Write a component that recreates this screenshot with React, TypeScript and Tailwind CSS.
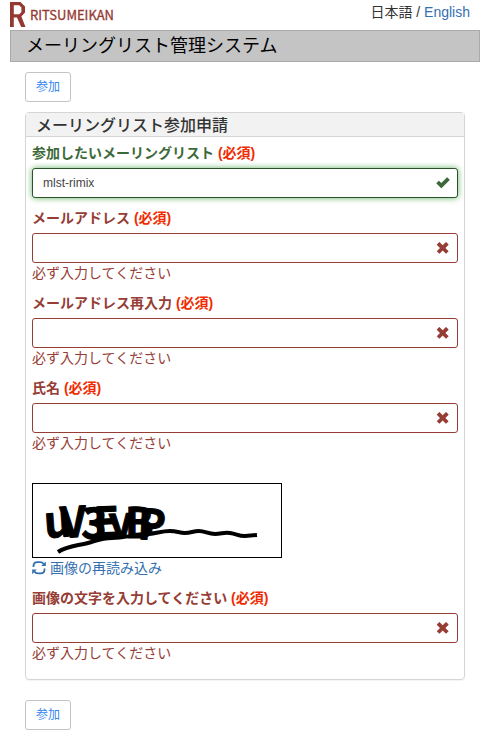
import { useState } from "react";
import type { ReactNode } from "react";
import clsx from "clsx";

const HELP = "必ず入力してください";

function OkIcon() {
  return (
    <svg viewBox="0 0 14 14" className="h-3.5 w-3.5" fill="currentColor" aria-hidden="true">
      <path d="M11.4 1.5 13.5 3.6c.2.2.2.4 0 .6L5.7 12c-.2.2-.5.2-.7 0L.5 7.6c-.2-.2-.2-.4 0-.6l2.1-2c.2-.2.4-.2.6 0l2.1 2.1 5.5-5.6c.2-.2.4-.2.6 0z" />
    </svg>
  );
}

function RemoveIcon() {
  return (
    <svg viewBox="0 0 14 14" className="h-3.5 w-3.5" fill="currentColor" aria-hidden="true">
      <path d="M3.7 1.2 6.7 4.2 9.7 1.2c.2-.2.4-.2.6 0l2.1 2.1c.2.2.2.4 0 .6l-3 3 3 3c.2.2.2.4 0 .6l-2.1 2.1c-.2.2-.4.2-.6 0l-3-3-3 3c-.2.2-.4.2-.6 0L1 10.5c-.2-.2-.2-.4 0-.6l3-3-3-3c-.2-.2-.2-.4 0-.6l2.1-2.1c.2-.2.4-.2.6 0z" />
    </svg>
  );
}

function RefreshIcon() {
  return (
    <svg viewBox="0 0 14 14" className="h-3.5 w-3.5" fill="none" stroke="currentColor" strokeWidth="1.8" aria-hidden="true">
      <path d="M1.5 6V5C1.500 2.600 3.200 1.200 5.400 1.200h2.800c1.500 0 2.700.7 3.500 1.800" />
      <path d="M12.500 7.500v1c0 2.400-1.700 3.800-3.900 3.800H5.800c-1.500 0-2.700-.7-3.500-1.800" />
      <path d="M13.800.4v4.600H9.200z" fill="currentColor" stroke="none" />
      <path d="M.2 13.200V8.600h4.600z" fill="currentColor" stroke="none" />
    </svg>
  );
}

function Logo() {
  return (
    <svg viewBox="0 0 108 27" className="h-[27px] w-[108px]" fill="#963832" role="img" aria-label="RITSUMEIKAN">
      <path
        fillRule="evenodd"
        d="M0 2h10.5l4.500 4.500v6l-3.600 3.900L15.500 27h-4.300L7 17.500H3.800V27H0zM3.800 5.300v8.900h5.400l2.200-2.300V7.500L9.200 5.300z"
      />
      <text x="20" y="20" fontSize="13" stroke="#963832" strokeWidth="0.3" className="font-['Noto_Sans_CJK_JP',sans-serif]">
        RITSUMEIKAN
      </text>
    </svg>
  );
}

const LETTERS = [
  { char: "u", x: 12, y: 54, size: 43, rotate: -4 },
  { char: "V", x: 28, y: 54, size: 42, rotate: -3 },
  { char: "3", x: 48, y: 54, size: 42, rotate: 4 },
  { char: "E", x: 61, y: 54, size: 42, rotate: -2 },
  { char: "v", x: 76, y: 54, size: 43, rotate: -2 },
  { char: "B", x: 92, y: 54, size: 42, rotate: 0 },
  { char: "P", x: 104, y: 55, size: 42, rotate: 3 },
];

function Captcha() {
  return (
    <svg viewBox="0 0 248 73" className="block h-[75px] w-[250px] border border-black" role="img" aria-label="captcha">
      <g className="font-['Noto_Sans_CJK_JP',sans-serif]" fontWeight="700" stroke="#000" strokeWidth="1" strokeLinejoin="round">
        {LETTERS.map((l) => (
          <text key={l.char} x={l.x} y={l.y} fontSize={l.size} transform={`rotate(${l.rotate} ${l.x} ${l.y})`}>
            {l.char}
          </text>
        ))}
      </g>
      <path
        d="M25 68C34 62 43 62 55 59c8-2 13-5 24-5 12 0 20-3 34-4 10 0 14-3 24-3 7 0 9 2 15 2s8-2 14-2 9 3 16 3 8-2 15-1 8 3 15 3l12-1"
        fill="none"
        stroke="#000"
        strokeWidth="4"
      />
      <path d="M48 26q8-2 14-1t18-1M96 25q8-3 15 1" fill="none" stroke="#000" strokeWidth="3" />
    </svg>
  );
}

type FieldProps = {
  id: string;
  label: string;
  valid?: boolean;
  initial?: string;
  className?: string;
};

function Field({ id, label, valid = false, initial = "", className }: FieldProps) {
  const [value, setValue] = useState(initial);

  return (
    <div className={clsx(valid ? "text-[#3c6939]" : "text-[#963d36]", className)}>
      <label htmlFor={id} className="mb-[5px] block font-bold">
        {label} <span className="text-[#f12b00]">(必須)</span>
      </label>
      <div className="relative">
        <input
          id={id}
          value={value}
          onChange={(e) => setValue(e.target.value)}
          className={clsx(
            "block h-[30px] w-full rounded-[3px] border bg-white px-2.5 pr-10 text-xs text-[#444] outline-none",
            valid ? "border-[#2b542c] shadow-[0_0_6px_#67b168]" : "border-[#963d36]",
          )}
        />
        <span className="pointer-events-none absolute inset-y-0 right-2 flex items-center">
          {valid ? <OkIcon /> : <RemoveIcon />}
        </span>
      </div>
      {!valid && <p>{HELP}</p>}
    </div>
  );
}

function Button({ children }: { children: ReactNode }) {
  return (
    <button type="button" className="block h-[30px] rounded-[3px] border border-[#c4c4c4] bg-white px-2.5 text-xs text-[#3385f0]">
      {children}
    </button>
  );
}

export default function App() {
  return (
    <div className="bg-white pr-[9px] pb-4 pl-2.5 font-['Liberation_Sans','Noto_Sans_CJK_JP',sans-serif] text-sm/5 text-[#333]" lang="ja">
      <header>
        <div className="flex h-[30px] items-start justify-between pr-2.5">
          <Logo />
          <p className="pt-0.5">
            日本語 / <a href="#en" className="text-[#3470b0]">English</a>
          </p>
        </div>
        <h1 className="flex h-8 items-center border border-[#aaa] bg-[#c4c4c4] px-[15px] text-lg/5 text-black">
          メーリングリスト管理システム
        </h1>
      </header>

      <main className="px-[15px] pt-2.5">
        <Button>参加</Button>

        <section className="mt-2.5 mb-5 rounded border border-[#d5d5d5] shadow-[0_1px_1px_rgba(0,0,0,0.05)]">
          <h2 className="flex h-6 items-center border-b border-[#d5d5d5] bg-[#f2f2f2] px-2.5 pt-0.5 text-base font-medium">
            メーリングリスト参加申請
          </h2>
          <form className="px-1.5 pt-1.5 pb-4">
            <Field id="list" label="参加したいメーリングリスト" initial="mlst-rimix" valid className="mb-2.5" />
            <Field id="email" label="メールアドレス" className="mb-2.5" />
            <Field id="email-confirm" label="メールアドレス再入力" className="mb-2.5" />
            <Field id="name" label="氏名" />
            <div className="mt-[30px] mb-2.5">
              <Captcha />
              <a href="#reload" className="flex w-fit items-center gap-1 text-[#3470b0]">
                <RefreshIcon />
                画像の再読み込み
              </a>
            </div>
            <Field id="captcha" label="画像の文字を入力してください" />
          </form>
        </section>

        <Button>参加</Button>
      </main>
    </div>
  );
}
